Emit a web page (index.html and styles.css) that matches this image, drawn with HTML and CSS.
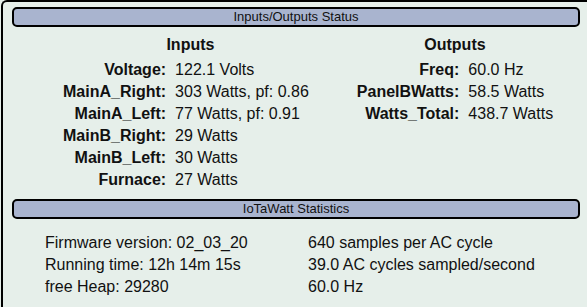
FILE: index.html
```html
<!DOCTYPE html>
<html lang="en">
<head>
    <meta charset="UTF-8">
    <title>IoTaWatt Status</title>
    <link rel="stylesheet" href="styles.css">
</head>
<body>
    <div class="panel">
        <div class="bar">Inputs/Outputs Status</div>
        <div class="io">
            <div class="io-table inputs">
                <div class="head">Inputs</div>
                <div class="label">Voltage:</div><div class="value">122.1 Volts</div>
                <div class="label">MainA_Right:</div><div class="value">303 Watts, pf: 0.86</div>
                <div class="label">MainA_Left:</div><div class="value">77 Watts, pf: 0.91</div>
                <div class="label">MainB_Right:</div><div class="value">29 Watts</div>
                <div class="label">MainB_Left:</div><div class="value">30 Watts</div>
                <div class="label">Furnace:</div><div class="value">27 Watts</div>
            </div>
            <div class="io-table outputs">
                <div class="head">Outputs</div>
                <div class="label">Freq:</div><div class="value">60.0 Hz</div>
                <div class="label">PanelBWatts:</div><div class="value">58.5 Watts</div>
                <div class="label">Watts_Total:</div><div class="value">438.7 Watts</div>
            </div>
        </div>
        <div class="bar">IoTaWatt Statistics</div>
        <div class="stats">
            <div class="stats-col">
                <div>Firmware version: 02_03_20</div>
                <div>Running time: 12h 14m 15s</div>
                <div>free Heap: 29280</div>
            </div>
            <div class="stats-col">
                <div>640 samples per AC cycle</div>
                <div>39.0 AC cycles sampled/second</div>
                <div>60.0 Hz</div>
            </div>
        </div>
    </div>
</body>
</html>
```

FILE: styles.css
```css
body {
    margin: 0;
    padding: 0;
    overflow: hidden;
    background: #e6efea;
    font-family: "Liberation Sans", Arial, sans-serif;
    color: #111;
}
.panel {
    margin-left: 1px;
    width: 586px;
    height: 307px;
    border: 2px solid #000;
    border-right: none;
    border-bottom: none;
    border-top-left-radius: 6px;
    background: #e6efea;
    padding-top: 5px;
    box-sizing: border-box;
}
.bar {
    margin-left: 9px;
    width: 568px;
    height: 20px;
    box-sizing: border-box;
    border: 2px solid #000;
    border-radius: 5px;
    background: #a9b4cf;
    font-size: 13px;
    line-height: 16px;
    text-align: center;
}
.io {
    display: flex;
    align-items: flex-start;
    padding-top: 6px;
    height: 166px;
}
.io-table {
    display: grid;
    grid-template-columns: auto auto;
    grid-template-rows: 26px;
    grid-auto-rows: 22px;
    font-size: 16px;
    line-height: 22px;
}
.head {
    grid-column: 1 / span 2;
    font-weight: bold;
    text-align: center;
    line-height: 24px;
}
.inputs {
    margin-left: 60px;
}
.inputs .head {
    padding-left: 9px;
}
.outputs {
    margin-left: 48px;
}
.label {
    font-weight: bold;
    text-align: right;
    padding-right: 9px;
}
.value {
    text-align: left;
}
.stats {
    display: flex;
    font-size: 16px;
    line-height: 22px;
    padding-top: 13px;
}
.stats-col:first-child {
    margin-left: 42px;
    width: 263px;
}
```
